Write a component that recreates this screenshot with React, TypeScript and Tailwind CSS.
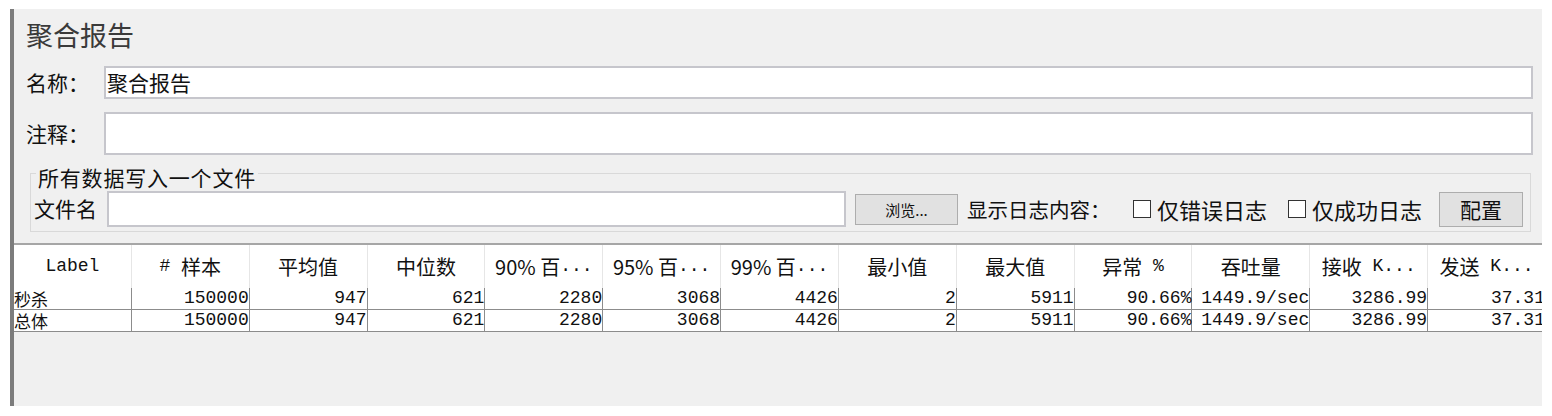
import React from "react";

const Mono: React.FC<{ children: React.ReactNode }> = ({ children }) => (
    <span className="font-['Liberation_Mono',monospace] text-[18px] whitespace-pre">{children}</span>
);

const headers: React.ReactNode[] = [
    <Mono>Label</Mono>,
    <><Mono># </Mono>样本</>,
    "平均值",
    "中位数",
    <>90% 百<Mono>...</Mono></>,
    <>95% 百<Mono>...</Mono></>,
    <>99% 百<Mono>...</Mono></>,
    "最小值",
    "最大值",
    <>异常<Mono> %</Mono></>,
    "吞吐量",
    <>接收<Mono> K...</Mono></>,
    <>发送<Mono> K...</Mono></>,
];

const rows: string[][] = [
    ["秒杀", "150000", "947", "621", "2280", "3068", "4426", "2", "5911", "90.66%", "1449.9/sec", "3286.99", "37.31"],
    ["总体", "150000", "947", "621", "2280", "3068", "4426", "2", "5911", "90.66%", "1449.9/sec", "3286.99", "37.31"],
];

const Checkbox: React.FC<{ label: string }> = ({ label }) => (
    <label className="flex items-center">
        <span className="w-[18px] h-[18px] border border-[#333] bg-white mr-[6px]"></span>
        <span className="text-[22px]">{label}</span>
    </label>
);

const App: React.FC = () => {
    return (
        <div className="bg-white w-[1552px] h-[416px] pt-[9px] pl-[10px] font-['Noto_Sans_CJK_SC',sans-serif] text-[#111]">
            <div className="w-[1532px] h-[397px] bg-[#f0f0f0] border-l-4 border-[#7c7c7c] flex flex-col overflow-hidden">
                {/* title */}
                <div className="h-[52px] flex items-center pl-[12px] text-[27px] text-[#3a3a3a]">聚合报告</div>

                <div className="pr-[9px] mt-[5px] flex items-center h-[33px]">
                    <div className="w-[90px] pl-[12px] text-[21px] leading-none">名称：</div>
                    <div className="flex-1 h-full bg-white border-2 border-[#c6c6cc] flex items-center pl-[1px] text-[21px]">聚合报告</div>
                </div>

                <div className="pr-[9px] mt-[13px] flex items-center h-[43px]">
                    <div className="w-[90px] pl-[12px] text-[21px] leading-none">注释：</div>
                    <div className="flex-1 h-full bg-white border-2 border-[#c6c6cc]"></div>
                </div>

                {/* write results to file */}
                <fieldset className="mt-[4px] ml-[16px] mr-[11px] border border-[#d9d9d9] px-[3px] pb-[4px]">
                    <legend className="ml-[2px] px-[2px] pt-[8px] text-[21px] tracking-[0.8px] leading-[20px]">所有数据写入一个文件</legend>
                    <div className="mt-[4px] h-[36px] flex items-center text-[21px]">
                        <span className="w-[73px]">文件名</span>
                        <div className="w-[739px] h-[36px] bg-white border-2 border-[#c6c6cc]"></div>
                        <button className="ml-[9px] w-[103px] h-[31px] bg-[#e1e1e1] border border-[#adadad] text-[15px] leading-none">浏览...</button>
                        <span className="ml-[9px] w-[166px] text-[20.5px]">显示日志内容：</span>
                        <Checkbox label="仅错误日志" />
                        <span className="w-[21px]"></span>
                        <Checkbox label="仅成功日志" />
                        <button className="ml-[17px] w-[84px] h-[35px] bg-[#e1e1e1] border border-[#adadad] text-[21px] leading-none">配置</button>
                    </div>
                </fieldset>

                {/* results table */}
                <div className="mt-[11px] w-[1531px] overflow-hidden">
                    <div className="w-[1532px] border-t-2 border-[#a6a6a6]">
                        <div className="grid grid-cols-[repeat(13,117.85px)] h-[43px] bg-white">
                            {headers.map((h, i) => (
                                <div key={i} className="flex items-center justify-center border-r border-[#e6e6e6] text-[20px] whitespace-nowrap">
                                    {h}
                                </div>
                            ))}
                        </div>
                        {rows.map((row, r) => (
                            <div key={r} className="grid grid-cols-[repeat(13,117.85px)] h-[22px] bg-white border-b border-[#8c8c8c]">
                                {row.map((cell, c) => (
                                    c === 0 ?
                                        <div key={c} className="border-r border-[#8c8c8c] text-[17px] leading-[21px] whitespace-nowrap">{cell}</div>
                                        :
                                        <div key={c} className="border-r border-[#8c8c8c] text-right font-['Liberation_Mono',monospace] text-[18px] leading-[21px] whitespace-nowrap">{cell}</div>
                                ))}
                            </div>
                        ))}
                    </div>
                </div>
            </div>
        </div>
    );
};

export default App;
